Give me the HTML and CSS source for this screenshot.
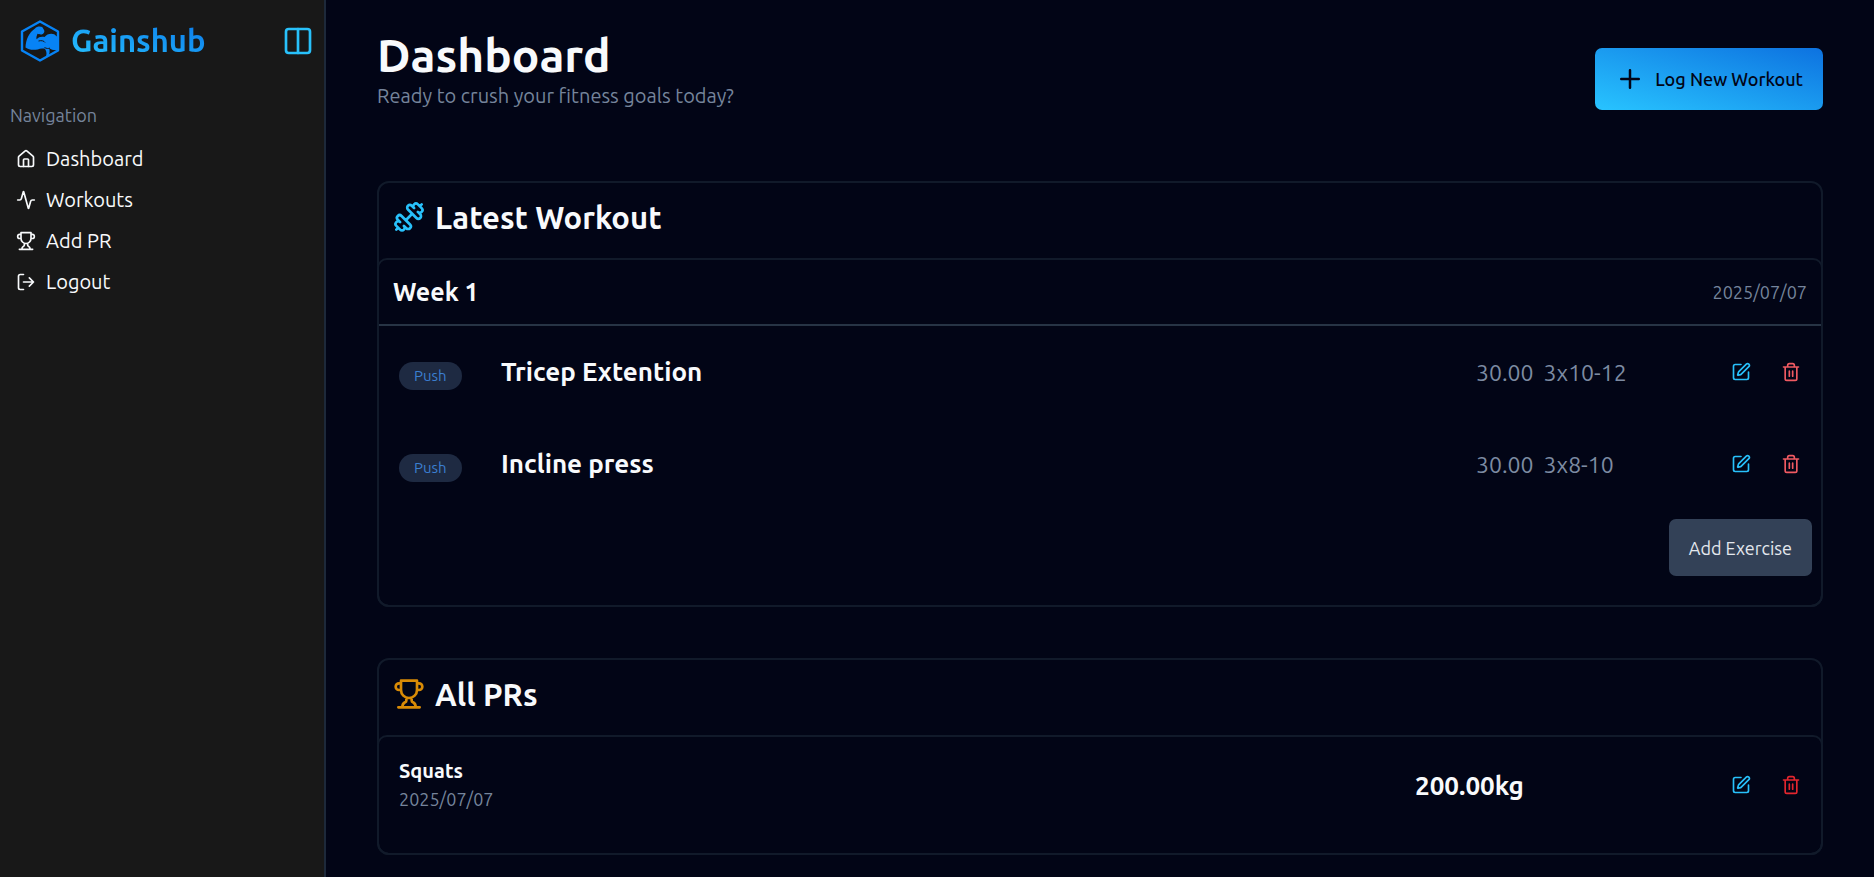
FILE: index.html
```html
<!DOCTYPE html>
<html lang="en">
<head>
<meta charset="utf-8">
<meta name="viewport" content="width=device-width, initial-scale=1">
<title>Gainshub</title>
<link rel="stylesheet" href="styles.css">
</head>
<body>
<svg class="sprite" aria-hidden="true">
  <symbol id="trophy" viewBox="0 0 24 24"><path d="M6 9H4.5a2.5 2.5 0 0 1 0-5H6M18 9h1.5a2.5 2.5 0 0 0 0-5H18M4 22h16M10 14.66V17c0 .55-.47.98-.97 1.21C7.85 18.75 7 20.24 7 22M14 14.66V17c0 .55.47.98.97 1.21C16.15 18.75 17 20.24 17 22M18 2H6v7a6 6 0 0 0 12 0V2Z"/></symbol>
  <symbol id="edit" viewBox="0 0 24 24"><path d="M12 3H5a2 2 0 0 0-2 2v14a2 2 0 0 0 2 2h14a2 2 0 0 0 2-2v-7M18.375 2.625a1 1 0 0 1 3 3l-9.013 9.014a2 2 0 0 1-.853.505l-2.873.84a.5.5 0 0 1-.62-.62l.84-2.873a2 2 0 0 1 .506-.852z"/></symbol>
  <symbol id="trash" viewBox="0 0 24 24"><path d="M3 6h18M19 6v14a2 2 0 0 1-2 2H7a2 2 0 0 1-2-2V6M8 6V4a2 2 0 0 1 2-2h4a2 2 0 0 1 2 2v2M10 11v6M14 11v6"/></symbol>
</svg>
<div class="layout">
  <aside class="sidebar">
    <div class="brand-row">
      <a class="brand" href="#">
        <svg class="logo" viewBox="0 0 40 44" aria-hidden="true">
          <path class="logo-frame" d="M20 2.500 38 12.500v19L20 41.500 2 31.500v-19Z"/>
          <path class="logo-arm" d="M15 9.500c1.800-2 5-2.400 7.200-1.400l2 3.200c.6 2-.4 3.600-2.400 4.100-1.800.4-3-.4-4.300-.6-.8 1.900-1.300 3.500-1 5.500 2.200-2.300 5-3 8-2.200 3-4.200 9.500-4.500 12-.9l1.500.3v13.500c-3.400.6-6.600-.2-8.800-1.700.8 3 .5 5.900-1.300 8.500l-2.400 1.300c1.400-3.300 1.500-6.600-.6-9.300-2.600-.5-4.900-.4-7.200.6-4.600 1-9 .4-12.200-1.800.3-8 3.500-15.100 9.500-19.100Z"/>
          <path class="logo-cut" d="M18.500 22c3-.8 5.500-.2 6.500 1.500M24.500 28.500c2 1.200 4 1.200 5.500.6"/>
        </svg>
        <span class="brand-name">Gainshub</span>
      </a>
      <button class="icon-button toggle" type="button" aria-label="Toggle sidebar">
        <svg class="icon icon-large" viewBox="0 0 24 24"><rect x="3" y="3" width="18" height="18" rx="2"/><path d="M12 3v18"/></svg>
      </button>
    </div>
    <nav class="nav" aria-labelledby="nav-label">
      <p class="nav-label" id="nav-label">Navigation</p>
      <a class="nav-link" href="#"><svg class="icon" viewBox="0 0 24 24"><path d="M15 21v-8a1 1 0 0 0-1-1h-4a1 1 0 0 0-1 1v8"/><path d="M3 10a2 2 0 0 1 .709-1.528l7-5.999a2 2 0 0 1 2.582 0l7 5.999A2 2 0 0 1 21 10v9a2 2 0 0 1-2 2H5a2 2 0 0 1-2-2z"/></svg>Dashboard</a>
      <a class="nav-link" href="#"><svg class="icon" viewBox="0 0 24 24"><path d="M22 12h-2.480a2 2 0 0 0-1.930 1.460l-2.350 8.360a.25.25 0 0 1-.48 0L9.240 2.180a.25.25 0 0 0-.48 0l-2.350 8.360A2 2 0 0 1 4.490 12H2"/></svg>Workouts</a>
      <a class="nav-link" href="#"><svg class="icon"><use href="#trophy"/></svg>Add PR</a>
      <a class="nav-link" href="#"><svg class="icon" viewBox="0 0 24 24"><path d="M9 21H5a2 2 0 0 1-2-2V5a2 2 0 0 1 2-2h4M16 17l5-5-5-5M21 12H9"/></svg>Logout</a>
    </nav>
  </aside>
  <main class="main">
    <header class="page-header">
      <div>
        <h1 class="page-title">Dashboard</h1>
        <p class="page-subtitle">Ready to crush your fitness goals today?</p>
      </div>
      <button class="log-button" type="button">
        <svg class="icon icon-plus" viewBox="0 0 24 24"><path d="M5 12h14M12 5v14"/></svg>Log New Workout
      </button>
    </header>

    <section class="card">
      <h2 class="card-title">
        <svg class="icon icon-heading cyan" viewBox="0 0 24 24"><path d="M17.596 12.768a2 2 0 1 0 2.829-2.829l-1.768-1.767a2 2 0 0 0 2.828-2.829l-2.828-2.828a2 2 0 0 0-2.829 2.828l-1.767-1.768a2 2 0 1 0-2.829 2.829zM2.500 21.500l1.400-1.400M20.100 3.900l1.400-1.400M5.343 21.485a2 2 0 1 0 2.829-2.828l1.767 1.768a2 2 0 1 0 2.829-2.829l-6.364-6.364a2 2 0 1 0-2.829 2.829l1.768 1.767a2 2 0 0 0-2.828 2.829zM9.600 14.400l4.800-4.800"/></svg>
        Latest Workout
      </h2>
      <div class="card-body">
        <div class="week">
          <h3 class="week-title">Week 1</h3>
          <time class="date" datetime="2025-07-07">2025/07/07</time>
        </div>
        <div class="exercise">
          <div class="tag-cell"><span class="tag">Push</span></div>
          <h4 class="exercise-name">Tricep Extention</h4>
          <p class="load"><span>30.00</span><span>3x10-12</span></p>
          <div class="actions">
            <button class="icon-button cyan" type="button" aria-label="Edit Tricep Extention"><svg class="icon"><use href="#edit"/></svg></button>
            <button class="icon-button coral" type="button" aria-label="Delete Tricep Extention"><svg class="icon"><use href="#trash"/></svg></button>
          </div>
        </div>
        <div class="exercise">
          <div class="tag-cell"><span class="tag">Push</span></div>
          <h4 class="exercise-name">Incline press</h4>
          <p class="load"><span>30.00</span><span>3x8-10</span></p>
          <div class="actions">
            <button class="icon-button cyan" type="button" aria-label="Edit Incline press"><svg class="icon"><use href="#edit"/></svg></button>
            <button class="icon-button coral" type="button" aria-label="Delete Incline press"><svg class="icon"><use href="#trash"/></svg></button>
          </div>
        </div>
        <div class="card-footer"><button class="add-button" type="button">Add Exercise</button></div>
      </div>
    </section>

    <section class="card">
      <h2 class="card-title">
        <svg class="icon icon-heading amber"><use href="#trophy"/></svg>
        All PRs
      </h2>
      <div class="card-body records">
        <div class="record">
          <div>
            <h3 class="record-name">Squats</h3>
            <time class="date" datetime="2025-07-07">2025/07/07</time>
          </div>
          <p class="record-weight">200.00kg</p>
          <div class="actions">
            <button class="icon-button cyan" type="button" aria-label="Edit Squats"><svg class="icon"><use href="#edit"/></svg></button>
            <button class="icon-button red" type="button" aria-label="Delete Squats"><svg class="icon"><use href="#trash"/></svg></button>
          </div>
        </div>
      </div>
    </section>
  </main>
</div>
</body>
</html>
```
FILE: styles.css
```css
:root {
  --bg: #020516;
  --sidebar: #181818;
  --line: #111a2a;
  --line-strong: #273445;
  --text: #f8fafc;
  --muted: #75849b;
  --cyan: #28c1fb;
}

* { box-sizing: border-box; }

body {
  margin: 0;
  background: var(--bg);
  color: var(--text);
  font-family: Ubuntu, "Noto Sans", sans-serif;
  font-size: 20px;
}

h1, h2, h3, h4, p { margin: 0; font-weight: 600; }
button { font: inherit; border: 0; cursor: pointer; }
a { color: inherit; text-decoration: none; }

.sprite { position: absolute; width: 0; height: 0; }

.icon {
  display: block;
  flex: none;
  width: 20px;
  height: 20px;
  fill: none;
  stroke: currentColor;
  stroke-width: 2;
  stroke-linecap: round;
  stroke-linejoin: round;
}
.icon-plus { width: 30px; height: 30px; }
.icon-large, .icon-heading { width: 32px; height: 32px; }
.cyan { color: var(--cyan); }
.amber { color: #d98b06; }
.coral { color: #f05a62; }
.red { color: #e3262e; }

.icon-button { display: block; padding: 0; background: none; }

.layout { display: flex; min-height: 100vh; }

.sidebar {
  flex: none;
  width: 326px;
  padding: 16px 10px;
  background: var(--sidebar);
  border-right: 2px solid #1d293a;
}
.brand-row {
  display: flex;
  align-items: center;
  justify-content: space-between;
  height: 50px;
}
.brand { display: flex; align-items: center; gap: 11px; padding-left: 10px; }
.logo { width: 40px; height: 44px; }
.logo-frame { fill: none; stroke: #0783f5; stroke-width: 2.400; stroke-linejoin: round; }
.logo-arm { fill: #0783f5; }
.logo-cut { fill: none; stroke: var(--sidebar); stroke-width: 1; }
.brand-name {
  font-size: 31px;
  line-height: 40px;
  font-weight: 600;
  color: transparent;
  background: linear-gradient(to top right, #28c4ff, #0a78ea);
  background-clip: text;
  -webkit-background-clip: text;
}
.toggle { color: var(--cyan); }

.nav { padding-top: 27px; }
.nav-label {
  font-size: 18px;
  line-height: 45px;
  font-weight: 400;
  color: var(--muted);
}
.nav-link {
  display: flex;
  align-items: center;
  gap: 10px;
  padding-left: 6px;
  line-height: 41px;
}

.main { flex: 1; min-width: 0; padding: 28px 51px 22px; }

.page-header {
  display: flex;
  align-items: center;
  justify-content: space-between;
  margin-bottom: 51px;
  height: 102px;
}
.page-title { font-size: 46px; line-height: 58px; }
.page-subtitle { font-weight: 400; line-height: 24px; color: var(--muted); margin-bottom: 25px; }

.log-button {
  display: flex;
  align-items: center;
  gap: 10px;
  height: 62px;
  padding: 0 20px;
  border-radius: 7px;
  background: linear-gradient(to top right, #28c4ff, #0d72e0);
  color: #020516;
  font-size: 18px;
  font-weight: 500;
}

.card { border: 2px solid var(--line); border-radius: 12px; margin-bottom: 51px; }
.card:last-child { margin-bottom: 0; }
.card-title {
  display: flex;
  align-items: center;
  gap: 10px;
  height: 75px;
  padding: 0 14px 7px;
  font-size: 31px;
}
.card-body {
  margin: 0 -2px -2px;
  border: 2px solid var(--line);
  border-radius: 10px 10px 12px 12px;
}

.week {
  display: flex;
  align-items: center;
  justify-content: space-between;
  height: 66px;
  padding: 0 14px;
  border-bottom: 2px solid var(--line-strong);
}
.week-title { font-size: 25px; }
.date { display: block; font-size: 18px; line-height: 28px; color: var(--muted); }

.exercise {
  display: grid;
  grid-template-columns: 102px 1fr 255px auto;
  align-items: baseline;
  height: 92px;
  padding: 28px 20px 0;
  line-height: 36px;
}
.tag {
  display: inline-block;
  padding: 0 15px;
  border-radius: 14px;
  background: #1e2a42;
  color: #3b7ed0;
  font-size: 15px;
  line-height: 28px;
}
.exercise-name { font-size: 26px; }
.load {
  display: flex;
  gap: 10px;
  font-size: 23px;
  font-weight: 400;
  color: #7d8ba2;
}
.actions { display: flex; gap: 30px; align-items: center; height: 36px; align-self: start; }

.card-footer { display: flex; justify-content: flex-end; padding: 9px 9px 29px; }
.add-button {
  height: 57px;
  padding: 0 20px;
  border-radius: 7px;
  background: #334157;
  color: #e4e8ee;
  font-size: 18px;
}

.records { padding-bottom: 20px; }
.record {
  display: grid;
  grid-template-columns: 1fr 316px auto;
  align-items: center;
  height: 96px;
  padding: 0 20px;
}
.record .actions { align-self: center; }
.record-name { font-size: 20px; line-height: 28px; }
.record-weight { font-size: 26px; }
```
